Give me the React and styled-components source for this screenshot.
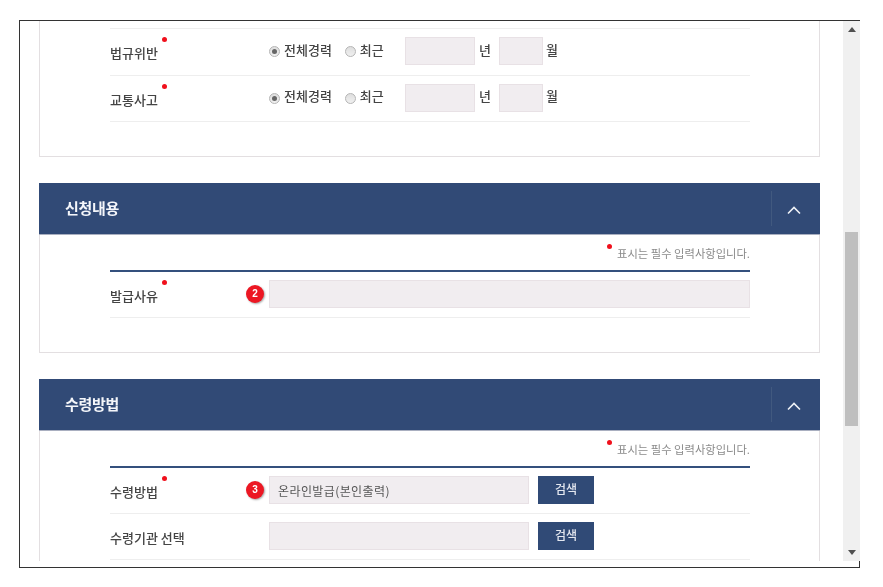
import React from "react";
import styled, { createGlobalStyle } from "styled-components";

const Global = createGlobalStyle`
  html, body { margin: 0; padding: 0; background: #fff; overflow: hidden; }
  body { font-family: "Noto Sans CJK KR", "Noto Sans", sans-serif; color: #444; }
`;

const Page = styled.div`
  width: 883px;
  height: 587px;
  padding: 20px 0 0 19px;
  box-sizing: border-box;
  filter: blur(0.35px);
`;

const Frame = styled.div`
  width: 841px;
  height: 548px;
  box-sizing: border-box;
  border: 1px solid #333;
  background: #fff;
`;

const Viewport = styled.div`
  display: flex;
  height: 540px;
  background: #fff;
  margin-right: -1px;
  position: relative;
`;

const Content = styled.div`
  flex: 1;
  min-width: 0;
  overflow: hidden;
  padding: 0 23px 0 19px;
`;

const Track = styled.div`
  width: 17px;
  flex: none;
  background: #f0f0f0;
  display: flex;
  flex-direction: column;
  align-items: center;
  justify-content: space-between;
  padding: 6px 0 6px;
  box-sizing: border-box;
`;

const Thumb = styled.div`
  position: absolute;
  right: 2px;
  top: 211px;
  width: 13px;
  height: 194px;
  background: #bfbfbf;
`;

const Panel = styled.section`
  border: 1px solid #e3dfe1;
  border-top: ${(p) => (p.$cut ? "none" : "1px solid #e3dfe1")};
  margin-bottom: 26px;
  padding: 0 69px 34px 70px;
  background: #fff;
`;

const PanelHeader = styled.header`
  display: flex;
  align-items: center;
  justify-content: space-between;
  height: 51px;
  margin: -1px -70px 0 -71px;
  padding: 0 0 0 26px;
  background: #314a76;
  border-bottom: 1px solid #a9afc0;
`;

const PanelTitle = styled.h2`
  margin: 0;
  padding-bottom: 2px;
  font-size: 15px;
  font-weight: 700;
  letter-spacing: -0.3px;
  color: #f4f6fa;
`;

const Toggle = styled.div`
  width: 49px;
  height: 35px;
  display: flex;
  align-items: center;
  justify-content: center;
  box-sizing: border-box;
  padding: 2px 4px 0 0;
  border-left: 1px solid #41597f;
`;

const TopSpacer = styled.div`
  height: 8px;
  box-sizing: border-box;
  border-bottom: 1px solid #eeeeee;
`;

const Notice = styled.p`
  height: 35px;
  margin: 0;
  display: flex;
  align-items: center;
  justify-content: flex-end;
  gap: 5px;
  font-size: 11.3px;
  line-height: 20px;
  color: #8b8b8b;
`;

const NoticeDot = styled.span`
  width: 5px;
  height: 5px;
  border-radius: 50%;
  background: #f0101c;
  margin-bottom: 12px;
`;

const Rule = styled.div`
  height: 2px;
  background: #34507d;
`;

const Row = styled.div`
  display: flex;
  align-items: center;
  height: ${(p) => p.$h || 46}px;
  box-sizing: border-box;
  padding-bottom: 1px;
  border-bottom: 1px solid #eeeeee;
`;

const Label = styled.div`
  width: 136px;
  flex: none;
  padding-top: 4px;
  font-size: 13px;
  line-height: 20px;
  color: #444;
  font-weight: 500;
`;

const LabelText = styled.span`
  position: relative;
  display: inline-block;
`;

const RedDot = styled.i`
  position: absolute;
  right: -9px;
  top: -6px;
  width: 5px;
  height: 5px;
  border-radius: 50%;
  background: #f0101c;
`;

const BadgeSlot = styled.div`
  width: 23px;
  flex: none;
`;

const Badge = styled.span`
  display: flex;
  align-items: center;
  justify-content: center;
  width: 18px;
  height: 18px;
  border-radius: 50%;
  background: #ec1723;
  box-shadow: 1px 1px 2px rgba(0, 0, 0, 0.35);
  color: #fff;
  font: 700 10px/1 "Liberation Sans", sans-serif;
`;

const RadioGroup = styled.div`
  display: flex;
  align-items: center;
  width: 136px;
  flex: none;
  font-size: 13px;
  font-weight: 500;
  color: #444;
  padding-bottom: 4px;
`;

const RadioItem = styled.span`
  display: inline-flex;
  align-items: center;
  gap: 4px;
  margin-right: 13px;
`;

const Radio = styled.span`
  display: flex;
  align-items: center;
  justify-content: center;
  width: 11px;
  height: 11px;
  margin-top: 5px;
  border-radius: 50%;
  box-sizing: border-box;
  border: 1px solid #b5b5b5;
  background: linear-gradient(#dedede, #f0f0f0);
  &::after {
    content: "";
    display: ${(p) => (p.$on ? "block" : "none")};
    width: 5px;
    height: 5px;
    border-radius: 50%;
    background: #666;
  }
`;

const Field = styled.input`
  display: block;
  flex: ${(p) => (p.$grow ? "1" : "none")};
  min-width: 0;
  width: ${(p) => p.$w || 70}px;
  height: 28px;
  box-sizing: border-box;
  border: 1px solid #e8e1e5;
  background: #f1edf0;
  padding: 0 8px;
  outline: none;
  font-family: inherit;
  font-size: 12px;
  letter-spacing: 0.4px;
  color: #555;
`;

const Unit = styled.span`
  font-size: 13px;
  font-weight: 500;
  color: #444;
  width: ${(p) => p.$w}px;
  padding: 0 0 4px ${(p) => p.$left}px;
  box-sizing: border-box;
  flex: none;
`;

const SearchButton = styled.button`
  width: 56px;
  height: 28px;
  margin-left: 9px;
  border: none;
  background: #304a76;
  color: #e4e8f0;
  font-family: inherit;
  font-size: 12px;
  font-weight: 500;
  padding: 0 0 3px;
`;

const Chevron = () => (
  <svg width="16" height="10" viewBox="0 0 16 10" fill="none">
    <polyline points="2,8.5 8,2.5 14,8.5" stroke="#eef1f6" strokeWidth="1.6" />
  </svg>
);

const Arrow = ({ down }) => (
  <svg width="8" height="5" viewBox="0 0 8 5">
    <polygon points={down ? "0,0 8,0 4,5" : "0,5 8,5 4,0"} fill="#505050" />
  </svg>
);

const ReqLabel = ({ children }) => (
  <Label>
    <LabelText>
      {children}
      <RedDot />
    </LabelText>
  </Label>
);

const CareerRow = ({ label }) => (
  <Row $h={46.5}>
    <ReqLabel>{label}</ReqLabel>
    <BadgeSlot />
    <RadioGroup>
      <RadioItem>
        <Radio $on />
        전체경력
      </RadioItem>
      <RadioItem>
        <Radio />
        최근
      </RadioItem>
    </RadioGroup>
    <Field $w={70} />
    <Unit $w={24} $left={4}>년</Unit>
    <Field $w={44} />
    <Unit $w={20} $left={3}>월</Unit>
  </Row>
);

const Head = ({ title }) => (
  <PanelHeader>
    <PanelTitle>{title}</PanelTitle>
    <Toggle>
      <Chevron />
    </Toggle>
  </PanelHeader>
);

const NoticeLine = () => (
  <Notice>
    <NoticeDot />
    표시는 필수 입력사항입니다.
  </Notice>
);

export default function App() {
  return (
    <Page>
      <Global />
      <Frame>
        <Viewport>
          <Content>
            <Panel $cut>
              <TopSpacer />
              <CareerRow label="법규위반" />
              <CareerRow label="교통사고" />
            </Panel>
            <Panel>
              <Head title="신청내용" />
              <NoticeLine />
              <Rule />
              <Row>
                <ReqLabel>발급사유</ReqLabel>
                <BadgeSlot>
                  <Badge>2</Badge>
                </BadgeSlot>
                <Field $grow />
              </Row>
            </Panel>
            <Panel>
              <Head title="수령방법" />
              <NoticeLine />
              <Rule />
              <Row>
                <ReqLabel>수령방법</ReqLabel>
                <BadgeSlot>
                  <Badge>3</Badge>
                </BadgeSlot>
                <Field $w={260} readOnly value="온라인발급(본인출력)" />
                <SearchButton>검색</SearchButton>
              </Row>
              <Row>
                <Label>수령기관 선택</Label>
                <BadgeSlot />
                <Field $w={260} />
                <SearchButton>검색</SearchButton>
              </Row>
            </Panel>
          </Content>
          <Track>
            <Arrow />
            <Arrow down />
          </Track>
          <Thumb />
        </Viewport>
      </Frame>
    </Page>
  );
}
